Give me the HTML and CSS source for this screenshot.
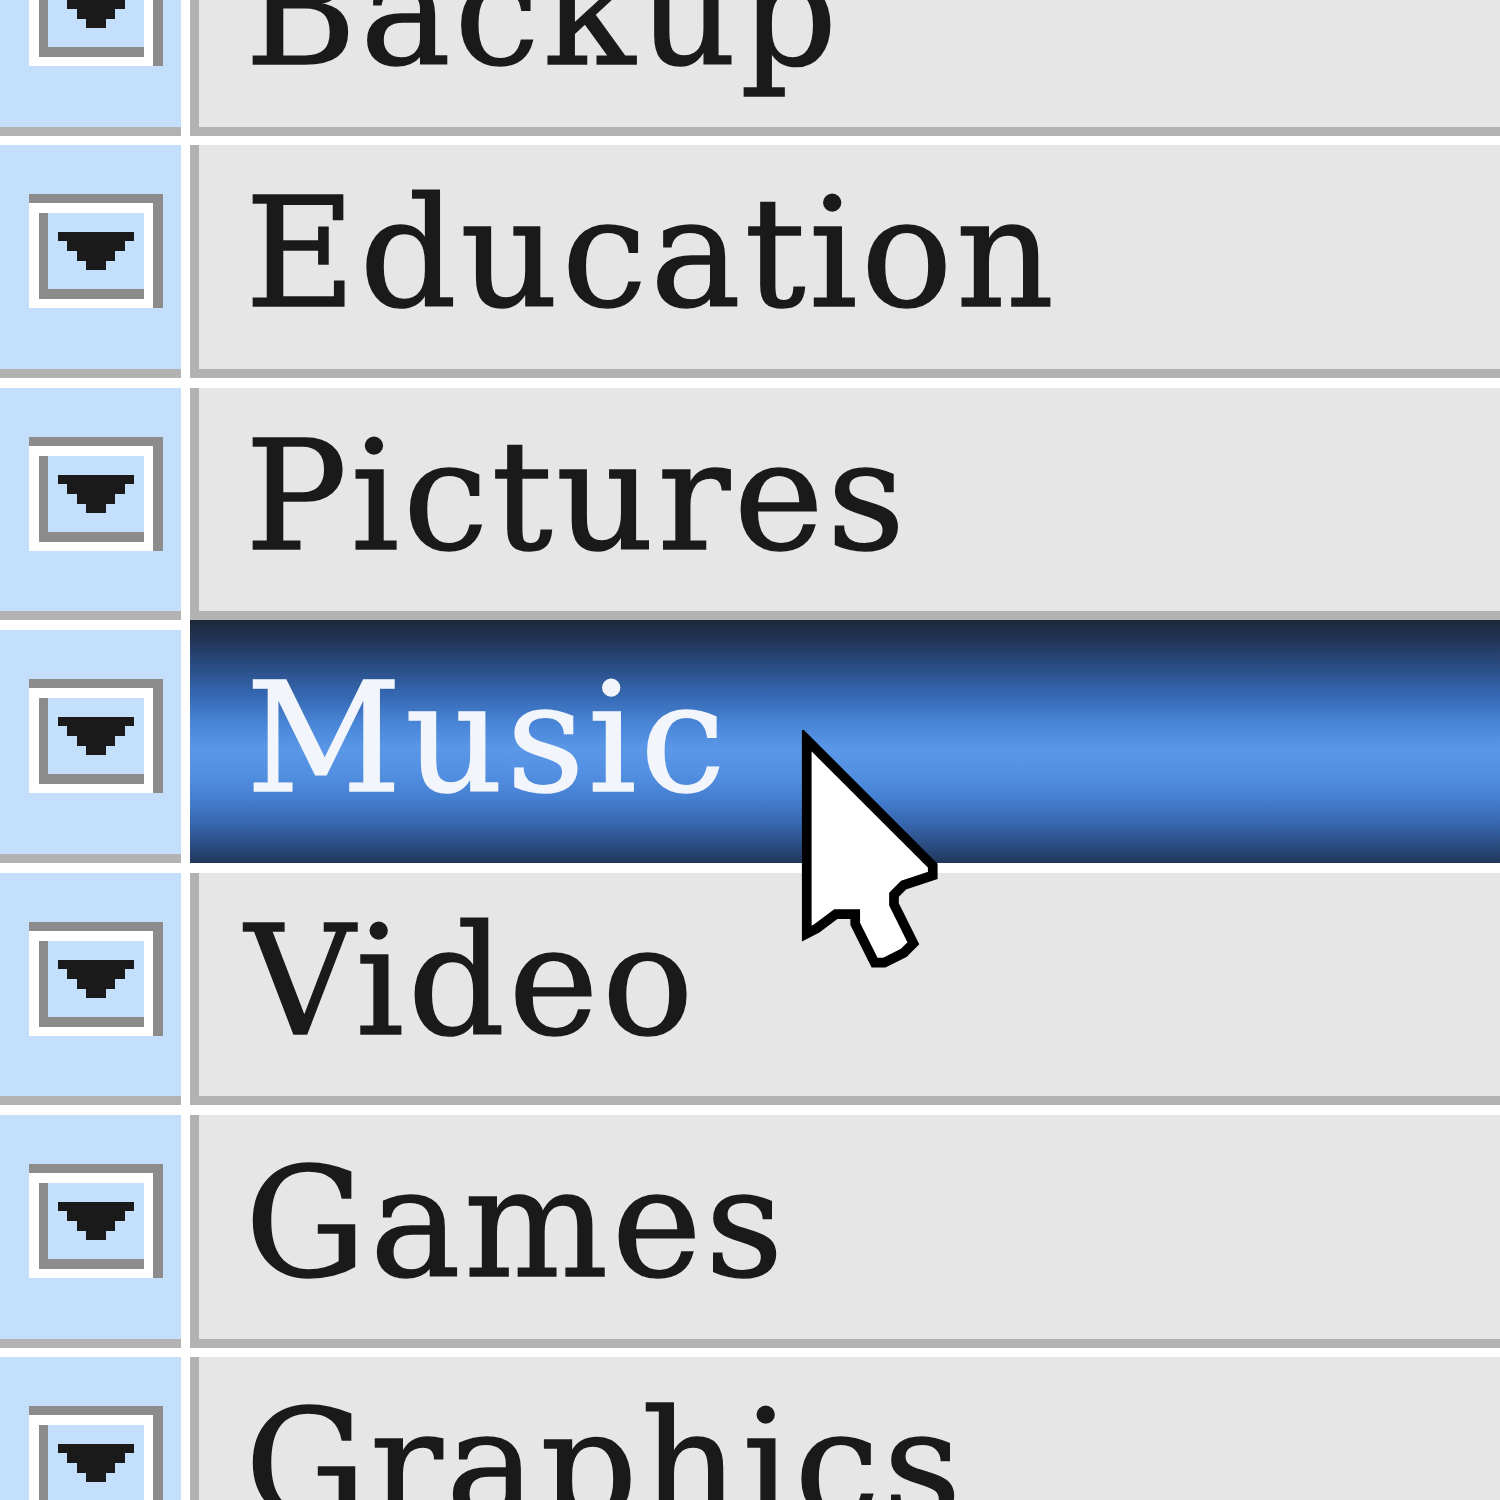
FILE: index.html
```html
<!DOCTYPE html>
<html lang="en">
<head>
    <meta charset="UTF-8">
    <title>Categories</title>
    <link rel="stylesheet" href="styles.css">
</head>
<body>
    <!-- Category list -->
    <div class="list">
        <div class="row">
            <div class="handle"><svg class="drop" viewBox="0 0 14 12"><use href="#drop"/></svg></div>
            <div class="label">Backup</div>
        </div>
        <div class="row">
            <div class="handle"><svg class="drop" viewBox="0 0 14 12"><use href="#drop"/></svg></div>
            <div class="label">Education</div>
        </div>
        <div class="row">
            <div class="handle"><svg class="drop" viewBox="0 0 14 12"><use href="#drop"/></svg></div>
            <div class="label">Pictures</div>
        </div>
        <div class="row selected">
            <div class="handle"><svg class="drop" viewBox="0 0 14 12"><use href="#drop"/></svg></div>
            <div class="label">Music</div>
        </div>
        <div class="row">
            <div class="handle"><svg class="drop" viewBox="0 0 14 12"><use href="#drop"/></svg></div>
            <div class="label">Video</div>
        </div>
        <div class="row">
            <div class="handle"><svg class="drop" viewBox="0 0 14 12"><use href="#drop"/></svg></div>
            <div class="label">Games</div>
        </div>
        <div class="row">
            <div class="handle"><svg class="drop" viewBox="0 0 14 12"><use href="#drop"/></svg></div>
            <div class="label">Graphics</div>
        </div>
    </div>

    <!-- Mouse pointer -->
    <svg class="pointer" viewBox="-1 -1 15 26">
        <polygon points="0,0 13,13 13,14 10,15 9,16 9,17 11,21 10,22 8,23 7,23 5,19 5,18 3,18 1,19.5 0,20"
                 fill="#fff" stroke="#000" stroke-width="1"/>
    </svg>

    <!-- Dropdown button shape -->
    <svg width="0" height="0" class="defs">
        <defs>
            <g id="drop">
                <rect x="0" y="0" width="14" height="1" fill="#8c8c8c"/>
                <rect x="13" y="0" width="1" height="12" fill="#8c8c8c"/>
                <rect x="0" y="1" width="1" height="11" fill="#fff"/>
                <rect x="0" y="11" width="13" height="1" fill="#fff"/>
                <rect x="1" y="1" width="12" height="1" fill="#fff"/>
                <rect x="12" y="1" width="1" height="10" fill="#fff"/>
                <rect x="1" y="2" width="1" height="9" fill="#8c8c8c"/>
                <rect x="1" y="10" width="11" height="1" fill="#8c8c8c"/>
                <rect x="3" y="4" width="8" height="1" fill="#1a1a1a"/>
                <rect x="4" y="5" width="6" height="1" fill="#1a1a1a"/>
                <rect x="5" y="6" width="4" height="1" fill="#1a1a1a"/>
                <rect x="6" y="7" width="2" height="1" fill="#1a1a1a"/>
            </g>
        </defs>
    </svg>
</body>
</html>
```

FILE: styles.css
```css
body {
    margin: 0;
    padding: 0;
    height: 1500px;
    overflow: hidden;
    background: #fff;
    font-family: "DejaVu Serif", serif;
    position: relative;
}

.defs {
    position: absolute;
}

.list {
    display: flex;
    flex-direction: column;
    gap: 9.7px; /* white line between rows */
    margin-top: -97px;
}

.row {
    display: flex;
    height: 232.7px;
}

.handle {
    width: 181px;
    flex-shrink: 0;
    box-sizing: border-box;
    background: #c4dffb;
    border-bottom: 9.7px solid #b2b2b2;
    padding: 48px 0 0 29px;
}

.drop {
    display: block;
    width: 134px;
    height: 116px;
    shape-rendering: crispEdges;
}

.label {
    flex: 1;
    margin-left: 9px;
    box-sizing: border-box;
    background: #e6e6e6;
    border-left: 9.7px solid #b2b2b2;
    border-bottom: 9.7px solid #b2b2b2;
    padding-left: 46px;
    font-size: 152px;
    line-height: 217px;
    letter-spacing: 3.5px;
    -webkit-text-stroke: 1.5px currentColor;
    color: #1a1a1a;
    white-space: nowrap;
}

/* Selected row */
.row.selected .label {
    margin-top: -9.7px;
    border: none;
    padding-left: 56px;
    padding-top: 9.7px;
    color: #f2f6fc;
    background: linear-gradient(to bottom,
        #1d2738 0%,
        #22365a 9%,
        #2a4d84 19%,
        #3568b2 31%,
        #4a86d8 43%,
        #5b97e7 53%,
        #5490e2 63%,
        #4580d3 73%,
        #3766ad 84%,
        #2a4c80 93%,
        #21375b 100%);
}

.pointer {
    position: absolute;
    left: 797px;
    top: 730px;
    width: 145.5px;
    height: 252px;
}
```
